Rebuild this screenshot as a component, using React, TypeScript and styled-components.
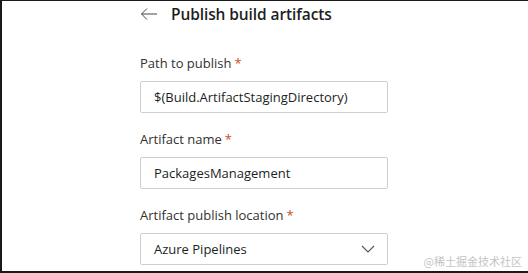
import styled, { createGlobalStyle } from "styled-components";

const GlobalStyle = createGlobalStyle`
  html, body {
    margin: 0;
    padding: 0;
    background: #ffffff;
  }
  body {
    font-family: "Open Sans", "Noto Sans", sans-serif;
  }
`;

const Frame = styled.div`
  width: 528px;
  height: 273px;
  box-sizing: border-box;
  border-top: 1px solid #1a1a1a;
  border-left: 2px solid #1a1a1a;
  border-bottom: 2px solid #1a1a1a;
  background: #ffffff;
  position: relative;
  overflow: hidden;
`;

const Panel = styled.div`
  padding: 0 0 0 138px;
  width: 248px;
  display: flex;
  flex-direction: column;
`;

const Header = styled.div`
  display: flex;
  align-items: center;
  gap: 13px;
  height: 26px;
  margin-bottom: 27px;
`;

const BackButton = styled.span`
  display: flex;
  align-items: center;
  color: #333333;
`;

const Title = styled.h1`
  margin: 0;
  font-size: 15.5px;
  font-weight: 600;
  color: #1e1e1e;
  letter-spacing: -0.1px;
`;

const Field = styled.div`
  display: flex;
  flex-direction: column;
  gap: 9px;
  margin-bottom: 17px;
`;

const Label = styled.label`
  font-size: 13px;
  color: #323130;
  line-height: 18px;
`;

const Required = styled.span`
  color: #c4501c;
  margin-left: 3px;
`;

const InputBox = styled.div<{ $select?: boolean }>`
  height: 32px;
  box-sizing: border-box;
  border: 1px solid #cfcfcf;
  border-radius: 2px;
  padding: 0 12px 0 13px;
  display: flex;
  align-items: center;
  justify-content: ${(p) => (p.$select ? "space-between" : "flex-start")};
  font-size: 13px;
  color: #201f1e;
`;

const Watermark = styled.div`
  position: absolute;
  right: 6px;
  bottom: 2px;
  font-family: "Noto Sans CJK SC", sans-serif;
  font-size: 11px;
  color: #c4c4c4;
`;

export default function App() {
  return (
    <>
      <GlobalStyle />
      <Frame>
        <Panel>
          <Header>
            <BackButton>
              <svg width="18" height="14" viewBox="0 0 18 14" fill="none">
                <path d="M17 7H1.5M7 1.5L1.5 7l5.5 5.5" stroke="#444" strokeWidth="1" />
              </svg>
            </BackButton>
            <Title>Publish build artifacts</Title>
          </Header>

          <Field>
            <Label>
              Path to publish<Required>*</Required>
            </Label>
            <InputBox>$(Build.ArtifactStagingDirectory)</InputBox>
          </Field>

          <Field>
            <Label>
              Artifact name<Required>*</Required>
            </Label>
            <InputBox>PackagesManagement</InputBox>
          </Field>

          <Field>
            <Label>
              Artifact publish location<Required>*</Required>
            </Label>
            <InputBox $select>
              <span>Azure Pipelines</span>
              <svg width="14" height="8" viewBox="0 0 14 8" fill="none">
                <path d="M1 1l6 6 6-6" stroke="#555" strokeWidth="1.1" />
              </svg>
            </InputBox>
          </Field>
        </Panel>
        <Watermark>@稀土掘金技术社区</Watermark>
      </Frame>
    </>
  );
}
